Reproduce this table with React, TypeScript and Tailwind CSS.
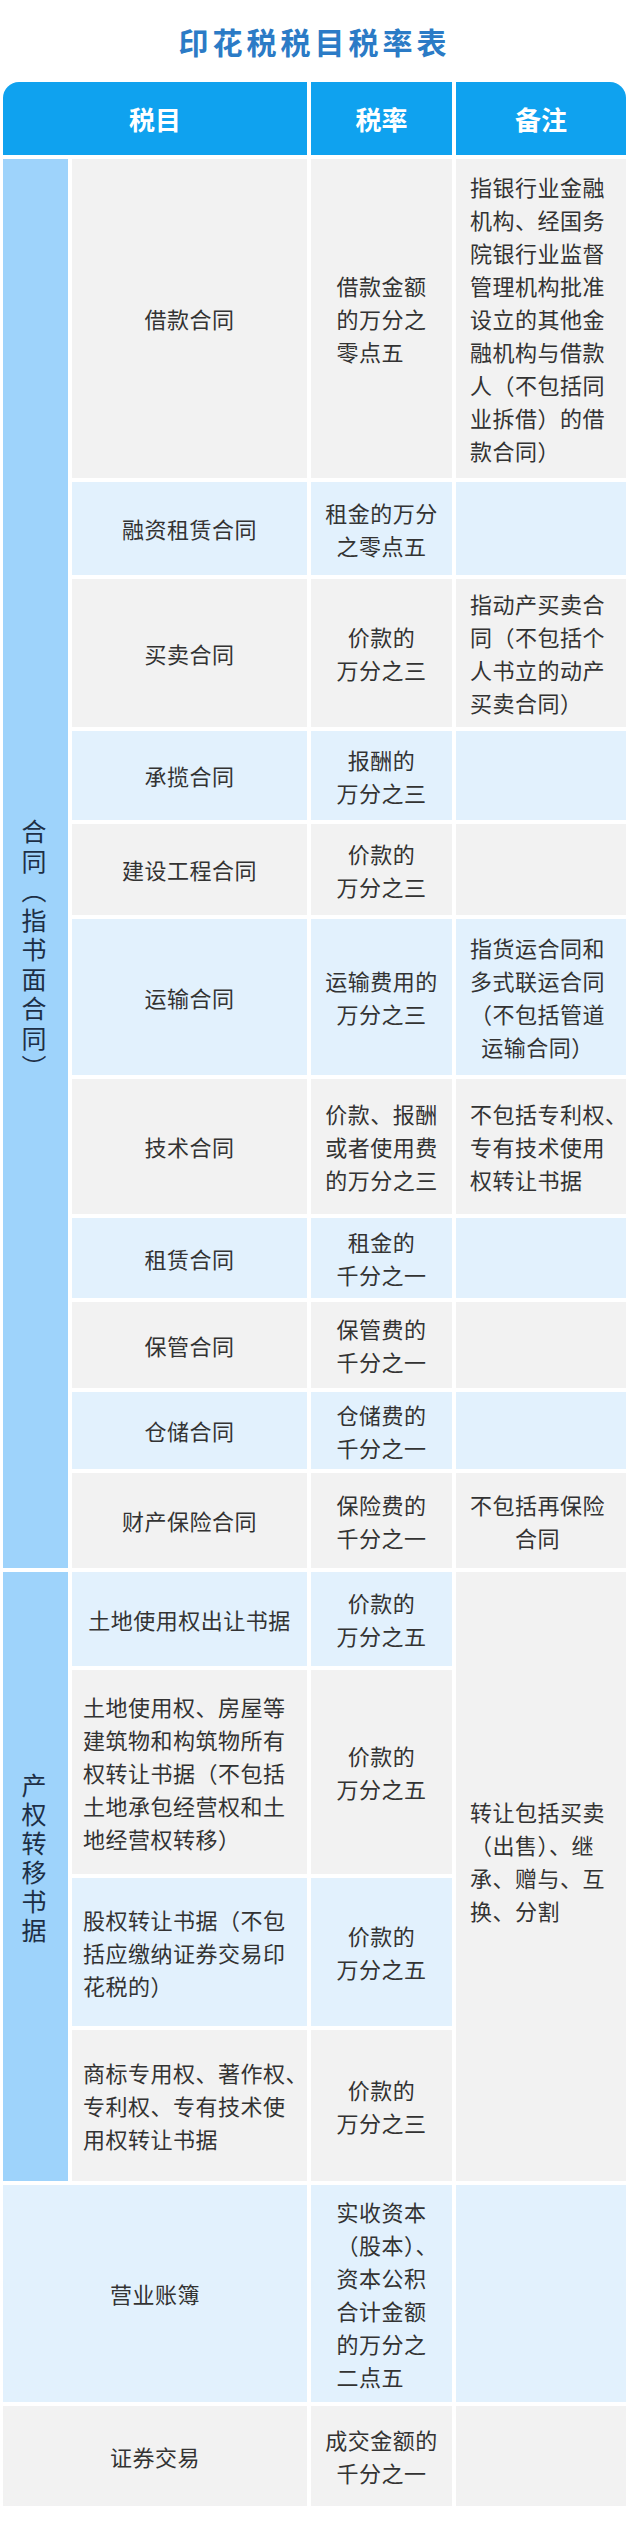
import React from "react";

type Align = "left" | "center";

function Lines({ lines, align = "center", className = "" }: { lines: string[]; align?: Align; className?: string }) {
  return (
    <div className={(align === "left" ? "text-left " : "text-center ") + className}>
      {lines.map((l, i) => (
        <div key={i} className="whitespace-nowrap">
          {l}
        </div>
      ))}
    </div>
  );
}

const GREY = "bg-[#f2f2f2]";
const BLUE = "bg-[#e2f1fd]";

function Cell({ bg, children, className = "" }: { bg: string; children?: React.ReactNode; className?: string }) {
  return <div className={`${bg} flex items-center justify-center ${className}`}>{children}</div>;
}

type Row = {
  bg: string;
  item: React.ReactNode;
  rate: React.ReactNode;
  note?: React.ReactNode | null;
};

const rows: Row[] = [
  {
    bg: GREY,
    item: "借款合同",
    rate: <Lines lines={["借款金额", "的万分之", "零点五"]} align="left" className="w-[90px]" />,
    note: (
      <Lines
        lines={["指银行业金融", "机构、经国务", "院银行业监督", "管理机构批准", "设立的其他金", "融机构与借款", "人（不包括同", "业拆借）的借", "款合同）"]}
        align="left"
      />
    ),
  },
  { bg: BLUE, item: "融资租赁合同", rate: <Lines lines={["租金的万分", "之零点五"]} />, note: "" },
  {
    bg: GREY,
    item: "买卖合同",
    rate: <Lines lines={["价款的", "万分之三"]} />,
    note: <Lines lines={["指动产买卖合", "同（不包括个", "人书立的动产", "买卖合同）"]} align="left" />,
  },
  { bg: BLUE, item: "承揽合同", rate: <Lines lines={["报酬的", "万分之三"]} />, note: "" },
  { bg: GREY, item: "建设工程合同", rate: <Lines lines={["价款的", "万分之三"]} />, note: "" },
  {
    bg: BLUE,
    item: "运输合同",
    rate: <Lines lines={["运输费用的", "万分之三"]} />,
    note: <Lines lines={["指货运合同和", "多式联运合同", "（不包括管道", "运输合同）"]} className="w-[135px]" />,
  },
  {
    bg: GREY,
    item: "技术合同",
    rate: <Lines lines={["价款、报酬", "或者使用费", "的万分之三"]} />,
    note: <Lines lines={["不包括专利权、", "专有技术使用", "权转让书据"]} align="left" />,
  },
  { bg: BLUE, item: "租赁合同", rate: <Lines lines={["租金的", "千分之一"]} />, note: "" },
  { bg: GREY, item: "保管合同", rate: <Lines lines={["保管费的", "千分之一"]} />, note: "" },
  { bg: BLUE, item: "仓储合同", rate: <Lines lines={["仓储费的", "千分之一"]} />, note: "" },
  {
    bg: GREY,
    item: "财产保险合同",
    rate: <Lines lines={["保险费的", "千分之一"]} />,
    note: <Lines lines={["不包括再保险", "合同"]} className="w-[135px]" />,
  },
];

const rows2: Row[] = [
  { bg: BLUE, item: "土地使用权出让书据", rate: <Lines lines={["价款的", "万分之五"]} /> },
  {
    bg: GREY,
    item: (
      <Lines
        lines={["土地使用权、房屋等", "建筑物和构筑物所有", "权转让书据（不包括", "土地承包经营权和土", "地经营权转移）"]}
        align="left"
      />
    ),
    rate: <Lines lines={["价款的", "万分之五"]} />,
  },
  {
    bg: BLUE,
    item: <Lines lines={["股权转让书据（不包", "括应缴纳证券交易印", "花税的）"]} align="left" />,
    rate: <Lines lines={["价款的", "万分之五"]} />,
  },
  {
    bg: GREY,
    item: <Lines lines={["商标专用权、著作权、", "专利权、专有技术使", "用权转让书据"]} align="left" />,
    rate: <Lines lines={["价款的", "万分之三"]} />,
  },
];

export default function App() {
  return (
    <div className="w-[629px] h-[2529px] bg-white font-['Noto_Sans_CJK_SC','Noto_Sans',sans-serif] text-[#333333]">
      <div className="h-[82px] flex items-center justify-center">
        <h1 className="text-[30px] leading-none font-bold tracking-[4px] text-[#2b7bc6]">印花税税目税率表</h1>
      </div>

      <div className="mx-[3px]">
        {/* header */}
        <div className="grid grid-cols-[304px_141px_170px] gap-x-[4px] h-[73px] mb-[4px] text-white text-[26px] font-bold">
          <div className="bg-[#0fa2ef] rounded-tl-[16px] flex items-center justify-center">税目</div>
          <div className="bg-[#0fa2ef] flex items-center justify-center">税率</div>
          <div className="bg-[#0fa2ef] rounded-tr-[16px] flex items-center justify-center">备注</div>
        </div>

        {/* body */}
        <div className="grid grid-cols-[65px_235px_141px_170px] grid-rows-[319px_93px_148px_89px_91px_156px_135px_80px_86px_77px_95px_94px_204px_148px_151px_217px_100px] gap-[4px] text-[22px] leading-[33px] tracking-[0.5px]">
          <div className="row-span-11 bg-[#9ed3fb] flex items-center justify-center pt-[177px] pr-[3px]">
            <div className="[writing-mode:vertical-rl] text-[25px] leading-[28px] tracking-[4.5px] text-[#1d2f46]">合同（指书面合同）</div>
          </div>
          {rows.map((r, i) => (
            <React.Fragment key={i}>
              <Cell bg={r.bg}>{r.item}</Cell>
              <Cell bg={r.bg}>{r.rate}</Cell>
              <Cell bg={r.bg} className={typeof r.note === "string" ? "" : "!justify-start pl-[14px]"}>
                {r.note}
              </Cell>
            </React.Fragment>
          ))}

          <div className="row-span-4 bg-[#9ed3fb] flex items-center justify-center pb-[33px] pr-[3px]">
            <div className="[writing-mode:vertical-rl] text-[25px] leading-[28px] tracking-[4px] text-[#1d2f46]">产权转移书据</div>
          </div>
          {rows2.map((r, i) => (
            <React.Fragment key={i}>
              <Cell bg={r.bg} className={typeof r.item === "string" ? "" : "!justify-start pl-[11px]"}>
                {r.item}
              </Cell>
              <Cell bg={r.bg}>{r.rate}</Cell>
              {i === 0 && (
                <div className="row-span-4 bg-[#f2f2f2] flex items-center justify-start pl-[14px] pb-[31px]">
                  <Lines lines={["转让包括买卖", "（出售）、继", "承、赠与、互", "换、分割"]} align="left" />
                </div>
              )}
            </React.Fragment>
          ))}

          <Cell bg={BLUE} className="col-span-2">营业账簿</Cell>
          <Cell bg={BLUE}>
            <Lines lines={["实收资本", "（股本）、", "资本公积", "合计金额", "的万分之", "二点五"]} align="left" className="w-[90px]" />
          </Cell>
          <Cell bg={BLUE} />

          <Cell bg={GREY} className="col-span-2">证券交易</Cell>
          <Cell bg={GREY}>
            <Lines lines={["成交金额的", "千分之一"]} />
          </Cell>
          <Cell bg={GREY} />
        </div>
      </div>
    </div>
  );
}
